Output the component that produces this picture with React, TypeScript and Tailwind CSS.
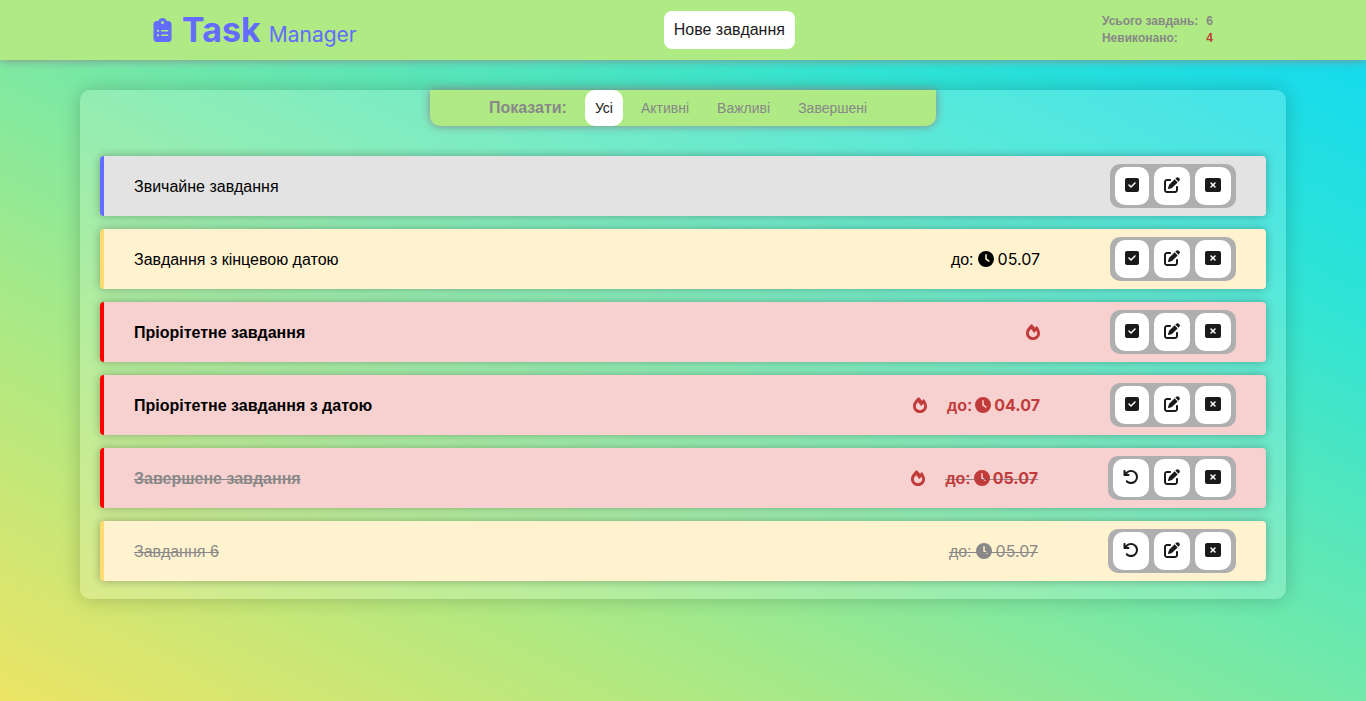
import { useState } from "react";
import {
  FaArrowRotateLeft,
  FaClipboardList,
  FaClock,
  FaPenToSquare,
  FaRectangleXmark,
  FaSquareCheck,
} from "react-icons/fa6";

type Kind = "normal" | "dated" | "priority";
type Task = { id: number; title: string; kind: Kind; due?: string; done?: boolean };

const TASKS: Task[] = [
  { id: 1, title: "Звичайне завдання", kind: "normal" },
  { id: 2, title: "Завдання з кінцевою датою", kind: "dated", due: "05.07" },
  { id: 3, title: "Пріорітетне завдання", kind: "priority" },
  { id: 4, title: "Пріорітетне завдання з датою", kind: "priority", due: "04.07" },
  { id: 5, title: "Завершене завдання", kind: "priority", due: "05.07", done: true },
  { id: 6, title: "Завдання 6", kind: "dated", due: "05.07", done: true },
];

const FILTERS = ["Усі", "Активні", "Важливі", "Завершені"];

const ROW_STYLE: Record<Kind, string> = {
  normal: "border-[#646cff] bg-[#e3e3e3]",
  dated: "border-[#ffdb70] bg-[#fff2cf]",
  priority: "border-[#ff0000] bg-[#f7d0d0] font-bold",
};

function FireIcon() {
  return (
    <svg viewBox="0 0 14 16" className="h-4 w-[14px]" fill="currentColor" aria-hidden="true">
      <path
        fillRule="evenodd"
        d="M5.5 0C3 2.4 0 5.6 0 9.2C0 13 3 16 7 16s7-3 7-6.8C14 6.6 12.6 3.8 10.8 1.9L9.1 3.7C8 2.3 6.8 1.1 5.5 0ZM5 5.1C3.6 6.7 2.8 7.9 2.8 9.3C2.8 11.6 4.6 13.2 7 13.2s4.2-1.6 4.2-3.9c0-.9-.3-1.8-.8-2.6L8.2 8.9Z"
      />
    </svg>
  );
}

function TaskRow({ task }: { task: Task }) {
  const button =
    "flex h-[38px] items-center justify-center rounded-[10px] bg-white pb-0.5 text-base text-[#1a1a1a]";
  const dateColor =
    task.kind === "priority" ? "text-[#c23b3b]" : task.done ? "text-[#888888]" : "text-black";
  return (
    <li
      className={`flex min-h-[60px] items-center rounded border-l-4 px-[30px] shadow-[0_0_10px_rgba(0,0,0,0.3)] ${ROW_STYLE[task.kind]}`}
    >
      <span className={`grow pt-0.5 ${task.done ? "text-[#888888] line-through" : "text-black"}`}>
        {task.title}
      </span>
      <span className={`flex items-center gap-5 ${dateColor}`}>
        {task.kind === "priority" && <FireIcon />}
        {task.due && (
          <span
            className={`flex items-center font-['Inter','Liberation_Sans',sans-serif] ${
              task.kind === "priority" ? "gap-[3px]" : "gap-1"
            } ${
              task.done
                ? "bg-[linear-gradient(#888888,#888888)] bg-[length:100%_1px] bg-[position:0_55%] bg-no-repeat"
                : ""
            }`}
          >
            <span className="pt-0.5 font-['Liberation_Sans',sans-serif]">до:</span>
            <FaClock />
            <span>{task.due}</span>
          </span>
        )}
      </span>
      <span className="ml-[70px] flex gap-[5px] rounded-[10px] bg-[#afafaf] px-[5px] py-[3px]">
        {task.done ? (
          <button type="button" aria-label="Повернути" className={`w-9 ${button}`}>
            <FaArrowRotateLeft />
          </button>
        ) : (
          <button type="button" aria-label="Завершити" className={`w-[34px] ${button}`}>
            <FaSquareCheck />
          </button>
        )}
        <button type="button" aria-label="Редагувати" className={`w-9 ${button}`}>
          <FaPenToSquare />
        </button>
        <button type="button" aria-label="Видалити" className={`w-9 ${button}`}>
          <FaRectangleXmark />
        </button>
      </span>
    </li>
  );
}

export default function App() {
  const [filter, setFilter] = useState("Усі");
  return (
    <div className="min-h-screen bg-[linear-gradient(to_top_right,#ece465_0%,#aee983_26%,#73e9a9_50%,#30e4d4_77%,#0fd8f4_100%)] pb-8 font-['Liberation_Sans',Arial,sans-serif] text-base">
      <header className="flex h-[60px] items-center justify-between bg-[#afea84] px-[153px] shadow-[0_0_10px_#888888]">
        <h1 className="flex items-baseline font-['Inter',sans-serif] text-[#646cff]">
          <FaClipboardList className="mr-[10px] h-6 w-[19px] self-center" />
          <span className="text-[34px] leading-10 font-bold">Task</span>
          <span className="ml-2 text-[21px]">Manager</span>
        </h1>
        <button
          type="button"
          className="h-[38px] rounded-lg bg-white px-[10px] text-[#1a1a1a]"
        >
          Нове завдання
        </button>
        <dl className="grid grid-cols-[auto_auto] gap-x-2 text-xs leading-[17px] font-bold text-[#888888]">
          <dt>Усього завдань:</dt>
          <dd>6</dd>
          <dt>Невиконано:</dt>
          <dd className="text-[#c23b3b]">4</dd>
        </dl>
      </header>
      <main className="mx-20 mt-[30px] rounded-[10px] bg-white/18 px-5 pb-[18px] shadow-[0_0_20px_rgba(0,0,0,0.2)]">
        <nav className="mx-auto flex h-9 max-w-[506px] items-center justify-center rounded-b-[10px] bg-[#afea84] text-sm text-[#888888] shadow-[0_0_10px_#888888]">
          <span className="mr-[18px] text-base font-bold">Показати:</span>
          <span className="flex gap-2">
            {FILTERS.map((name) => (
              <button
                key={name}
                type="button"
                aria-pressed={name === filter}
                onClick={() => setFilter(name)}
                className={`h-9 rounded-[10px] px-[10px] ${
                  name === filter ? "bg-white text-[#1a1a1a]" : ""
                }`}
              >
                {name}
              </button>
            ))}
          </span>
        </nav>
        <ul className="mt-[30px] flex flex-col gap-[13px]">
          {TASKS.map((task) => (
            <TaskRow key={task.id} task={task} />
          ))}
        </ul>
      </main>
    </div>
  );
}
